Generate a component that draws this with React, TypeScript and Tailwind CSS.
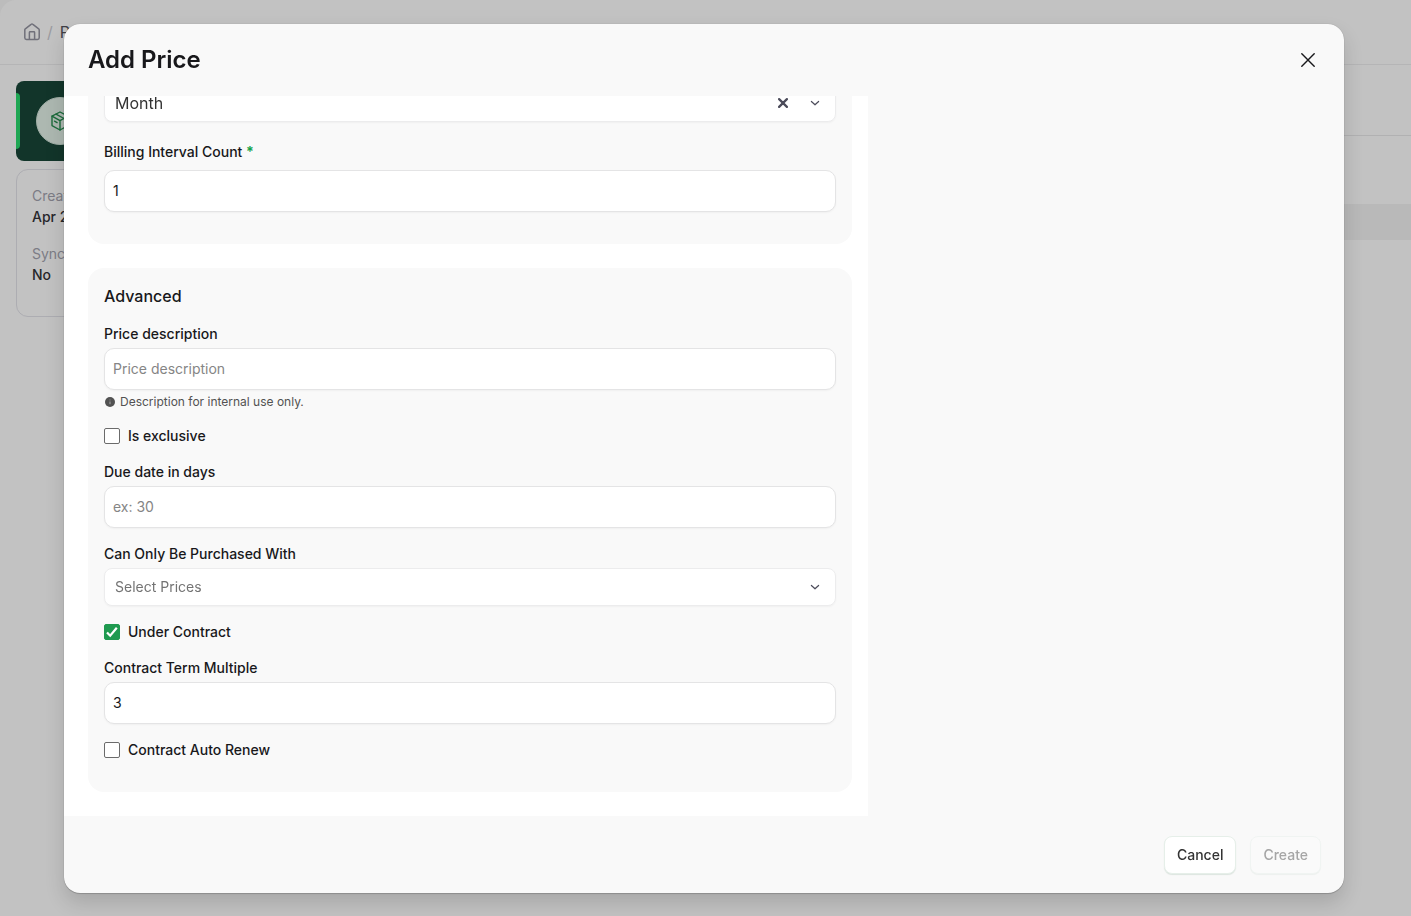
import { useState } from "react";
import type { ReactNode } from "react";

// ─── Icons ────────────────────────────────────────────────────────────────────
const HomeIcon = () => (
  <svg viewBox="0 0 16 18" className="h-[18px] w-4" fill="none" stroke="currentColor" strokeWidth="1.5" strokeLinejoin="round">
    <path d="M.8 6.900a1.400 1.400 0 0 1 .5-1.100L7.100 1.300a1.400 1.400 0 0 1 1.800 0l5.800 4.500a1.400 1.400 0 0 1 .5 1.100v7.800a1.700 1.700 0 0 1-1.700 1.700h-11A1.700 1.700 0 0 1 .8 14.700Z" />
    <path d="M5.400 16.400V9.500a.7.7 0 0 1 .7-.7h3.800a.7.7 0 0 1 .7.7v6.900" />
  </svg>
);

const PackageIcon = () => (
  <svg viewBox="0 0 20 20" className="h-5 w-5" fill="none" stroke="currentColor" strokeWidth="1.400" strokeLinecap="round" strokeLinejoin="round">
    <path d="M10 1 18 5.200v9.400L10 19l-8-4.400V5.200Z" />
    <path d="M2 5.200 10 9.700l8-4.500M10 9.700V19" />
    <path d="m6 3.200 8 4.300" />
    <path d="m4.500 10.200 2.600 1.400" />
  </svg>
);

const CloseIcon = () => (
  <svg viewBox="0 0 14 14" className="h-3.5 w-3.5" stroke="currentColor" strokeWidth="1.400" strokeLinecap="round">
    <path d="m.8.8 12.400 12.400M13.200.8.8 13.200" />
  </svg>
);

const ClearIcon = () => (
  <svg viewBox="0 0 10 10" className="h-2.5 w-2.5" stroke="currentColor" strokeWidth="2.200" strokeLinecap="round">
    <path d="m1.100 1.100 7.800 7.800M8.900 1.100 1.100 8.900" />
  </svg>
);

const ChevronIcon = () => (
  <svg viewBox="0 0 10 10" className="h-2.5 w-2.5" fill="none" stroke="currentColor" strokeWidth="1.200" strokeLinecap="round" strokeLinejoin="round">
    <path d="m1.400 3.500 3.600 3.300 3.600-3.300" />
  </svg>
);

const InfoIcon = () => (
  <svg viewBox="0 0 12 12" className="h-3 w-3">
    <circle cx="6" cy="6" r="5" fill="#525252" />
    <path d="M6 5.500v2.700M6 3.600v.8" stroke="#a8a8a8" strokeWidth="1" />
  </svg>
);

// ─── Form pieces ──────────────────────────────────────────────────────────────
const inputClass =
  "h-[42px] w-full rounded-[10px] border border-[#e4e4e5] bg-white px-2 pb-0.5 text-sm text-[#18181b] shadow-[0_1px_2px_rgba(0,0,0,0.04)] outline-none placeholder:text-[#858585]";

const TextField = ({
  id,
  label,
  placeholder,
  defaultValue,
  hint,
}: {
  id: string;
  label: string;
  placeholder?: string;
  defaultValue?: string;
  hint?: string;
}) => (
  <div className="flex flex-col gap-1">
    <label htmlFor={id} className="text-sm font-medium">
      {label}
    </label>
    <input id={id} type="text" placeholder={placeholder} defaultValue={defaultValue} className={inputClass} />
    {hint && (
      <p className="flex items-center gap-1 text-xs text-[#525252]">
        <InfoIcon />
        {hint}
      </p>
    )}
  </div>
);

const SelectBox = ({ children }: { children: ReactNode }) => (
  <div className="relative h-[38px] rounded-lg border border-[#ececed] bg-white shadow-[0_1px_2px_rgba(0,0,0,0.04)]">
    {children}
    <span className="pointer-events-none absolute inset-y-0 right-[15px] flex items-center text-[#4b4b5a]">
      <ChevronIcon />
    </span>
  </div>
);

const CheckField = ({ id, label, defaultChecked = false }: { id: string; label: string; defaultChecked?: boolean }) => {
  const [checked, setChecked] = useState(defaultChecked);
  return (
    <div className="flex items-center gap-2">
      <span className="relative h-4 w-4">
        <input
          id={id}
          type="checkbox"
          checked={checked}
          onChange={(e) => setChecked(e.target.checked)}
          className="block h-4 w-4 appearance-none rounded-[2px] border border-[#6b6b6b] bg-white checked:border-[#1f9a50] checked:bg-[#1f9a50]"
        />
        {checked && (
          <svg viewBox="0 0 16 16" className="pointer-events-none absolute inset-0 h-4 w-4" fill="none" stroke="#fff" strokeWidth="2.200">
            <path d="m3 8.400 3.200 3.300 6.600-8" />
          </svg>
        )}
      </span>
      <label htmlFor={id} className="text-sm font-medium">
        {label}
      </label>
    </div>
  );
};

// ─── Page behind the dialog ───────────────────────────────────────────────────
const Detail = ({ label, value }: { label: string; value: string }) => (
  <div className="text-sm leading-[21px]">
    <p className="text-[#7c7c85]">{label}</p>
    <p className="font-medium text-[#27272a]">{value}</p>
  </div>
);

const Background = () => (
  <div className="h-screen overflow-hidden bg-[#bcbcbc]">
    <div className="flex h-full flex-col rounded-tl-2xl bg-[#c2c2c2]">
      <header className="flex h-[65px] shrink-0 items-center gap-[7px] border-b border-[#b5b5b6] px-6">
        <a href="#" aria-label="Home" className="text-[#70707a]">
          <HomeIcon />
        </a>
        <span className="text-[#9a9a9f]">/</span>
        <a href="#" className="text-[#3f3f46]">Pr</a>
      </header>
      <div className="flex flex-1">
        <aside className="flex w-80 flex-col gap-2 py-4 pl-4">
          <div className="flex h-20 items-center gap-4 overflow-hidden rounded-lg bg-[#12352a]">
            <span className="h-14 w-1 rounded-r bg-[#1ea653]" />
            <span className="flex h-12 w-12 items-center justify-center rounded-full border border-[#a0aea6] bg-[#adb8b1] text-[#1c6b3c]">
              <PackageIcon />
            </span>
          </div>
          <div className="flex flex-col gap-4 rounded-xl border border-[#adadb2] px-[15px] pt-[15px] pb-[31px]">
            <Detail label="Creat" value="Apr 2" />
            <Detail label="Sync" value="No" />
          </div>
        </aside>
        <section className="flex-1">
          <div className="h-[71px] border-b border-[#b1b1b2]" />
          <div className="mt-[68px] h-9 bg-[#b9b9b9]" />
        </section>
      </div>
    </div>
  </div>
);

// ─── Dialog ───────────────────────────────────────────────────────────────────
const AddPriceDialog = () => {
  const [interval, setInterval] = useState("month");

  return (
    <div className="fixed inset-0 flex px-16 pt-6 pb-[23px]">
      <div
        role="dialog"
        aria-labelledby="dialog-title"
        className="flex w-full max-w-7xl flex-col overflow-hidden rounded-2xl bg-[#f9f9f9] shadow-[0_0_1px_rgba(0,0,0,0.35),0_1px_1px_rgba(0,0,0,0.16),0_10px_20px_rgba(0,0,0,0.14)]"
      >
        <div className="flex h-[72px] shrink-0 items-center justify-between px-6">
          <h1 id="dialog-title" className="text-2xl font-semibold">
            Add Price
          </h1>
          <button type="button" aria-label="Close" className="flex h-6 w-6 items-center justify-center">
            <CloseIcon />
          </button>
        </div>

        <div className="flex min-h-0 flex-1">
          <form className="flex min-w-0 flex-1 flex-col justify-end gap-6 overflow-hidden bg-white pr-4 pb-6 pl-6">
            <section className="flex flex-col gap-5 rounded-2xl bg-[#f9f9f9] px-4 pt-4 pb-8">
              <SelectBox>
                <select
                  aria-label="Billing interval"
                  value={interval}
                  onChange={(e) => setInterval(e.target.value)}
                  className="h-full w-full appearance-none rounded-lg bg-transparent px-2.5 text-base text-[#333333] outline-none"
                >
                  <option value="" />
                  <option value="month">Month</option>
                </select>
                <button
                  type="button"
                  aria-label="Clear"
                  onClick={() => setInterval("")}
                  className="absolute inset-y-0 right-[47px] flex items-center text-[#4b4b5a]"
                >
                  <ClearIcon />
                </button>
              </SelectBox>
              <div className="flex flex-col gap-2">
                <label htmlFor="interval-count" className="text-sm font-medium">
                  Billing Interval Count <span className="font-bold text-[#16a34a]">*</span>
                </label>
                <input id="interval-count" type="text" defaultValue="1" className={inputClass} />
              </div>
            </section>

            <section className="flex flex-col gap-4 rounded-2xl bg-[#f9f9f9] px-4 pt-4 pb-8">
              <h2 className="text-base font-medium">Advanced</h2>
              <TextField
                id="description"
                label="Price description"
                placeholder="Price description"
                hint="Description for internal use only."
              />
              <CheckField id="exclusive" label="Is exclusive" />
              <TextField id="due-date" label="Due date in days" placeholder="ex: 30" />
              <div className="flex flex-col gap-1">
                <label htmlFor="purchased-with" className="text-sm font-medium">
                  Can Only Be Purchased With
                </label>
                <SelectBox>
                  <select
                    id="purchased-with"
                    className="h-full w-full appearance-none rounded-lg bg-transparent px-2.5 text-sm text-[#737373] outline-none"
                  >
                    <option>Select Prices</option>
                  </select>
                </SelectBox>
              </div>
              <CheckField id="under-contract" label="Under Contract" defaultChecked />
              <TextField id="term-multiple" label="Contract Term Multiple" defaultValue="3" />
              <CheckField id="auto-renew" label="Contract Auto Renew" />
            </section>
          </form>
          <div className="w-[476px] shrink-0" />
        </div>

        <div className="flex shrink-0 justify-end gap-3.5 px-[23px] pt-5 pb-[19px]">
          <button
            type="button"
            className="h-[38px] rounded-lg border border-[#e6efe9] bg-white px-3 text-sm font-medium text-[#333333] shadow-[0_1px_1px_rgba(20,83,45,0.12)]"
          >
            Cancel
          </button>
          <button
            type="button"
            disabled
            className="h-[38px] rounded-lg border border-[#f0f4f2] bg-[#fafafa] px-3 text-sm font-medium text-[#a6a6a6] shadow-[0_1px_1px_rgba(20,83,45,0.05)]"
          >
            Create
          </button>
        </div>
      </div>
    </div>
  );
};

const App = () => (
  <div className="font-[Inter,sans-serif] text-[#18181b]">
    <Background />
    <AddPriceDialog />
  </div>
);

export default App;
